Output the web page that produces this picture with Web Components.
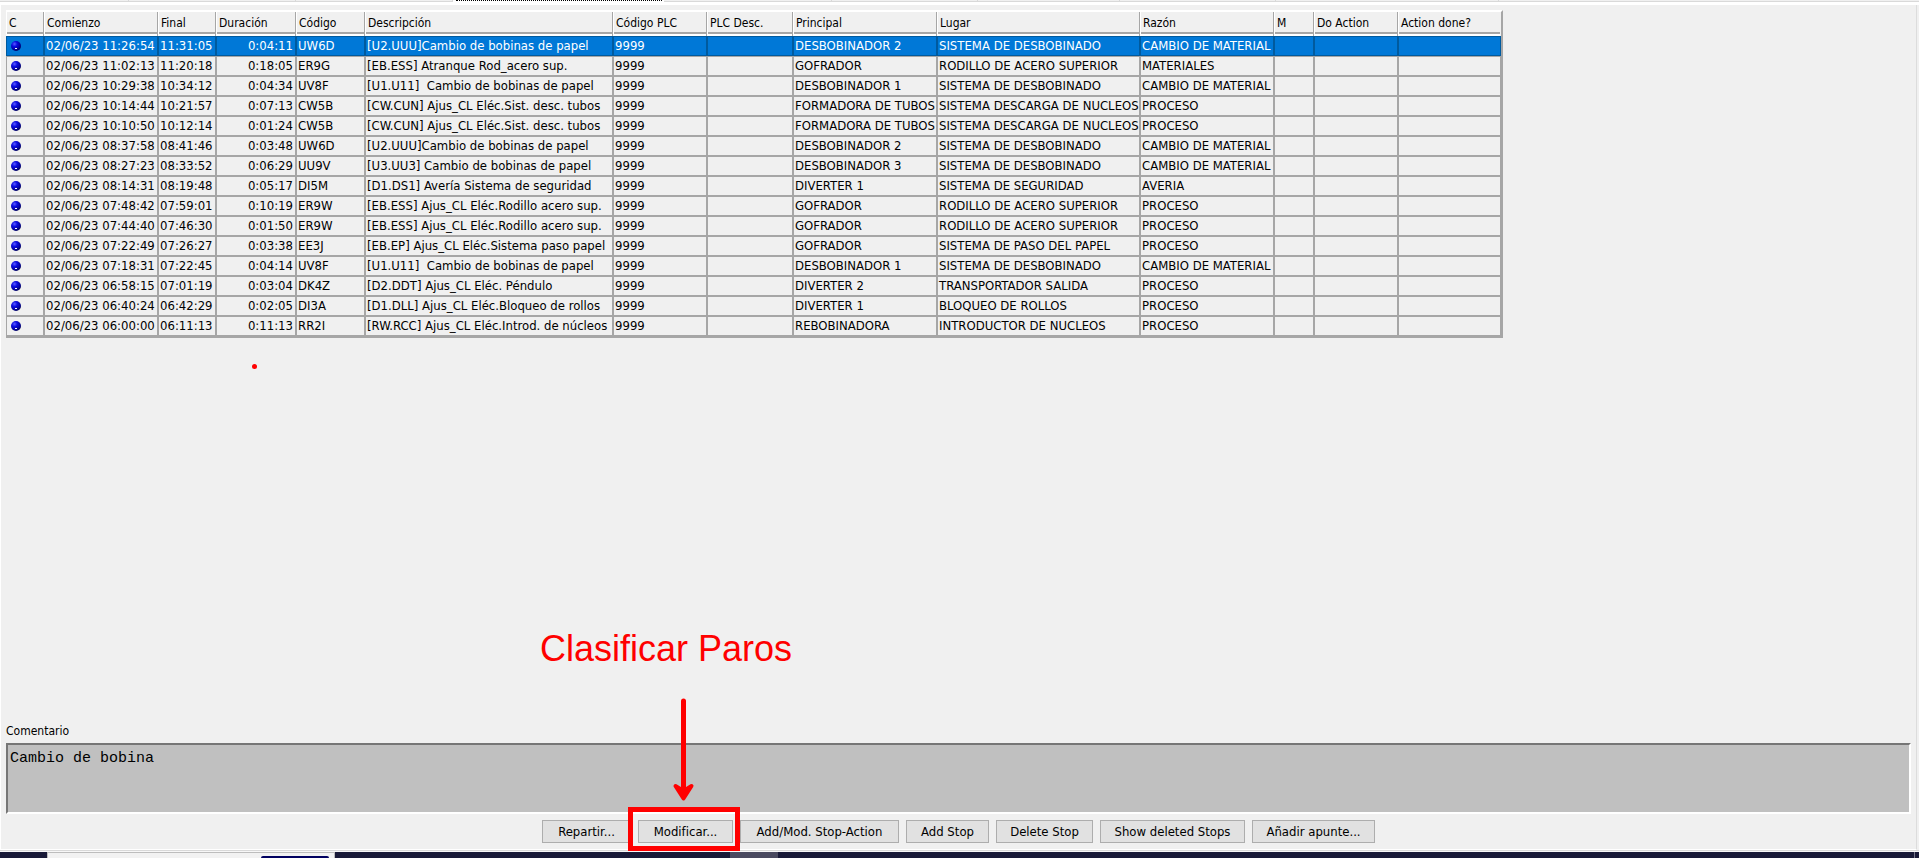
<!DOCTYPE html>
<html lang="es">
<head>
<meta charset="utf-8">
<title>Paros</title>
<style>
  html, body { height: 100%; margin: 0; }
  body {
    background: #f0f0f0; color: #000; overflow: hidden;
    font: 13px/16px "DejaVu Sans Condensed", "DejaVu Sans", sans-serif;
    --line: #a6a6a6; --mark: #ff0000;
  }
</style>
</head>
<body>
<stops-app></stops-app>
<script>
const define = (name, html, setup) => customElements.define(name, class extends HTMLElement {
  constructor() {
    super();
    const t = document.createElement('template');
    t.innerHTML = html;
    this.attachShadow({ mode: 'open' }).append(t.content.cloneNode(true));
  }
  connectedCallback() { if (setup) setup(this, this.shadowRoot); }
});

/* Lower edge of the tab row that closes the top of the panel */
define('tab-edge', `
<style>
  :host { display: block; background: #fff; padding-bottom: 3px; }
  .row { display: flex; height: 2px; box-sizing: border-box; }
  i { box-sizing: border-box; border-right: 1px solid #d9d9d9; border-bottom: 1px solid #d9d9d9; background: #f0f0f0; }
  .on { border: 0; border-top: 1px dotted #000; background: #fff; margin: 0 2px 0 3px; }
  i:last-child { flex: 1; border-right: 0; }
</style>
<div class="row"></div>`, (el, root) => {
  const row = root.querySelector('.row');
  for (const w of [129, 167, 157, 'on', 168, 146, 142, 156, 223, 0]) {
    const i = document.createElement('i');
    if (w === 'on') { i.className = 'on'; i.style.width = '206px'; }
    else if (w) i.style.width = w + 'px';
    row.append(i);
  }
});

define('status-ball', `
<style>:host { display: block; width: 10px; height: 10px; white-space: normal; } svg { display: block; }</style>
<svg width="10" height="10" viewBox="0 0 10 10" role="img" aria-label="Clasificado">
  <defs><radialGradient id="g" cx=".35" cy=".3" r=".75">
    <stop offset="0" stop-color="#5a5aff"/><stop offset=".35" stop-color="#0a0ae0"/>
    <stop offset=".7" stop-color="#0000a8"/><stop offset="1" stop-color="#000050"/>
  </radialGradient></defs>
  <circle cx="5" cy="5" r="5" fill="url(#g)"/>
  <rect x="4" y="7" width="2" height="1" fill="#fff"/>
</svg>`);

const COLUMNS = [['C', 38], ['Comienzo', 114], ['Final', 58], ['Duración', 80], ['Código', 69], ['Descripción', 248],
  ['Código PLC', 94], ['PLC Desc.', 86], ['Principal', 144], ['Lugar', 203], ['Razón', 134], ['M', 40],
  ['Do Action', 84], ['Action done?', 103]];
const D = '02/06/23 ';
const STOPS = [
  ['11:26:54', '11:31:05', '0:04:11', 'UW6D', '[U2.UUU]Cambio de bobinas de papel', 'DESBOBINADOR 2', 'SISTEMA DE DESBOBINADO', 'CAMBIO DE MATERIAL'],
  ['11:02:13', '11:20:18', '0:18:05', 'ER9G', '[EB.ESS] Atranque Rod_acero sup.', 'GOFRADOR', 'RODILLO DE ACERO SUPERIOR', 'MATERIALES'],
  ['10:29:38', '10:34:12', '0:04:34', 'UV8F', '[U1.U11]  Cambio de bobinas de papel', 'DESBOBINADOR 1', 'SISTEMA DE DESBOBINADO', 'CAMBIO DE MATERIAL'],
  ['10:14:44', '10:21:57', '0:07:13', 'CW5B', '[CW.CUN] Ajus_CL Eléc.Sist. desc. tubos', 'FORMADORA DE TUBOS', 'SISTEMA DESCARGA DE NUCLEOS', 'PROCESO'],
  ['10:10:50', '10:12:14', '0:01:24', 'CW5B', '[CW.CUN] Ajus_CL Eléc.Sist. desc. tubos', 'FORMADORA DE TUBOS', 'SISTEMA DESCARGA DE NUCLEOS', 'PROCESO'],
  ['08:37:58', '08:41:46', '0:03:48', 'UW6D', '[U2.UUU]Cambio de bobinas de papel', 'DESBOBINADOR 2', 'SISTEMA DE DESBOBINADO', 'CAMBIO DE MATERIAL'],
  ['08:27:23', '08:33:52', '0:06:29', 'UU9V', '[U3.UU3] Cambio de bobinas de papel', 'DESBOBINADOR 3', 'SISTEMA DE DESBOBINADO', 'CAMBIO DE MATERIAL'],
  ['08:14:31', '08:19:48', '0:05:17', 'DI5M', '[D1.DS1] Avería Sistema de seguridad', 'DIVERTER 1', 'SISTEMA DE SEGURIDAD', 'AVERIA'],
  ['07:48:42', '07:59:01', '0:10:19', 'ER9W', '[EB.ESS] Ajus_CL Eléc.Rodillo acero sup.', 'GOFRADOR', 'RODILLO DE ACERO SUPERIOR', 'PROCESO'],
  ['07:44:40', '07:46:30', '0:01:50', 'ER9W', '[EB.ESS] Ajus_CL Eléc.Rodillo acero sup.', 'GOFRADOR', 'RODILLO DE ACERO SUPERIOR', 'PROCESO'],
  ['07:22:49', '07:26:27', '0:03:38', 'EE3J', '[EB.EP] Ajus_CL Eléc.Sistema paso papel', 'GOFRADOR', 'SISTEMA DE PASO DEL PAPEL', 'PROCESO'],
  ['07:18:31', '07:22:45', '0:04:14', 'UV8F', '[U1.U11]  Cambio de bobinas de papel', 'DESBOBINADOR 1', 'SISTEMA DE DESBOBINADO', 'CAMBIO DE MATERIAL'],
  ['06:58:15', '07:01:19', '0:03:04', 'DK4Z', '[D2.DDT] Ajus_CL Eléc. Péndulo', 'DIVERTER 2', 'TRANSPORTADOR SALIDA', 'PROCESO'],
  ['06:40:24', '06:42:29', '0:02:05', 'DI3A', '[D1.DLL] Ajus_CL Eléc.Bloqueo de rollos', 'DIVERTER 1', 'BLOQUEO DE ROLLOS', 'PROCESO'],
  ['06:00:00', '06:11:13', '0:11:13', 'RR2I', '[RW.RCC] Ajus_CL Eléc.Introd. de núcleos', 'REBOBINADORA', 'INTRODUCTOR DE NUCLEOS', 'PROCESO'],
];

define('stops-table', `
<style>
  :host { display: block; width: max-content; border-top: 2px solid #fff; border-right: 2px solid var(--line); border-bottom: 2px solid var(--line); }
  table { table-layout: fixed; width: 1495px; border-spacing: 0; border-collapse: separate; }
  th, td { box-sizing: border-box; white-space: pre; text-align: left; vertical-align: middle; }
  th {
    height: 24px; padding: 0 2px 2px; font-size: 12px; line-height: 16px; font-weight: normal;
    border-left: 1px solid #fff; border-right: 1px solid var(--line);
    background: linear-gradient(#f0f0f0 20px, var(--line) 20px, var(--line) 22px, #fff 22px) border-box;
  }
  th:last-child { border-right-color: #f0f0f0; }
  td { height: 20px; padding: 0 0 0 1px; line-height: 18px; border: 1px solid var(--line); }
  td:first-child { padding-left: 4px; }
  .num { text-align: right; padding-right: 2px; }
  [aria-selected=true] td { background: #0078d7; color: #fff; border-color: #005a9e; }
</style>
<table><colgroup></colgroup><thead><tr></tr></thead><tbody></tbody></table>`, (el, root) => {
  const head = root.querySelector('thead tr'), body = root.querySelector('tbody');
  for (const [name, width] of COLUMNS) {
    const col = document.createElement('col');
    col.style.width = width + 'px';
    root.querySelector('colgroup').append(col);
    const th = document.createElement('th');
    th.scope = 'col';
    th.textContent = name;
    head.append(th);
  }
  STOPS.forEach(([start, end, length, code, text, main, place, reason], n) => {
    const tr = body.insertRow();
    tr.setAttribute('aria-selected', n === 0);
    tr.insertCell().append(document.createElement('status-ball'));
    for (const v of [D + start, end, length, code, text, '9999', '', main, place, reason, '', '', ''])
      tr.insertCell().textContent = v;
    tr.cells[3].className = 'num';
  });
});

define('comment-box', `
<style>
  :host { display: block; }
  label { display: block; font-size: 12px; line-height: 16px; margin-bottom: 4px; }
  textarea {
    display: block; box-sizing: border-box; width: 100%; height: 71px; margin: 0; padding: 5px 2px; resize: none;
    background: #c0c0c0; color: #000; outline: 0; border: 2px solid #fff; border-radius: 0;
    border-top-color: #767676; border-left-color: #767676;
    font: 15px/18px "Liberation Mono", monospace;
  }
</style>
<label for="c">Comentario</label>
<textarea id="c" readonly>Cambio de bobina</textarea>`);

define('tool-button', `
<style>
  :host { display: block; position: relative; }
  button {
    display: block; box-sizing: border-box; width: 100%; height: 23px; padding: 0; white-space: nowrap;
    border: 1px solid #adadad; background: #e1e1e1; color: #000; font: inherit; line-height: 20px;
  }
</style>
<button type="button"></button><slot></slot>`, (el, root) => {
  root.querySelector('button').textContent = el.getAttribute('label');
  el.style.width = el.getAttribute('width') + 'px';
});

/* Caption, arrow and frame drawn over the button that holds them */
define('callout-mark', `
<style>
  :host { display: block; position: absolute; z-index: 1; left: -10px; bottom: -8px; width: 112px; pointer-events: none; color: var(--mark); }
  .stack { display: flex; flex-direction: column; align-items: center; }
  p { margin: 0; font: 36px/40px "Liberation Sans", sans-serif; white-space: nowrap; align-self: flex-end; margin-right: -52px; }
  svg { display: block; margin: 29px 0 5px; }
  .frame { box-sizing: border-box; width: 112px; height: 44px; border: 5px solid var(--mark); }
</style>
<div class="stack">
  <p><slot></slot></p>
  <svg width="24" height="104" viewBox="0 0 24 104" fill="none" stroke="currentColor" stroke-linecap="round" stroke-linejoin="round" stroke-width="5" aria-hidden="true">
    <path d="M11.5 3V95"/><path d="M3.500 88 11.500 100.500 19.500 88 11.500 93Z" fill="currentColor" stroke-width="4"/>
  </svg>
  <div class="frame"></div>
</div>`);

define('task-strip', `
<style>
  :host { display: flex; height: 6px; background: #191a38; }
  .search { width: 288px; margin-left: 47px; box-sizing: border-box; border: 1px solid #bdbdbd; border-bottom: 0; background: #f2f2f2; display: flex; justify-content: flex-end; align-items: flex-end; }
  .pill { width: 68px; height: 2px; margin-right: 5px; background: #000060; border-radius: 2px 2px 0 0; }
  .app { width: 48px; margin-left: 395px; background: #4a4a60; }
  .peek { width: 1px; margin-left: auto; margin-right: 4px; background: #77778a; }
</style>
<div class="search"><div class="pill"></div></div><div class="app"></div><div class="peek"></div>`);

define('stops-app', `
<style>
  :host { display: flex; flex-direction: column; height: 100vh; }
  main {
    flex: 1; position: relative; display: flex; flex-direction: column; box-sizing: border-box;
    margin-right: 2px; padding: 5px 5px 6px; border-left: 1px solid #fff; border-right: 1px solid #dcdcdc; border-bottom: 1px solid #fff;
  }
  comment-box { margin-top: auto; }
  nav { display: flex; justify-content: center; gap: 7px; margin-top: 6px; }
  .edge { height: 2px; box-sizing: border-box; border-top: 1px solid #d9d9d9; background: #f8f8f8; }
  .speck { position: absolute; left: 251px; top: 359px; width: 5px; height: 5px; border-radius: 50%; background: var(--mark); }
</style>
<tab-edge></tab-edge>
<main>
  <stops-table></stops-table>
  <div class="speck"></div>
  <comment-box></comment-box>
  <nav>
    <tool-button label="Repartir..." width="89"></tool-button>
    <tool-button label="Modificar..." width="95"><callout-mark>Clasificar Paros</callout-mark></tool-button>
    <tool-button label="Add/Mod. Stop-Action" width="159"></tool-button>
    <tool-button label="Add Stop" width="83"></tool-button>
    <tool-button label="Delete Stop" width="97"></tool-button>
    <tool-button label="Show deleted Stops" width="145"></tool-button>
    <tool-button label="Añadir apunte..." width="123"></tool-button>
  </nav>
</main>
<div class="edge"></div>
<task-strip></task-strip>`);
</script>
</body>
</html>
